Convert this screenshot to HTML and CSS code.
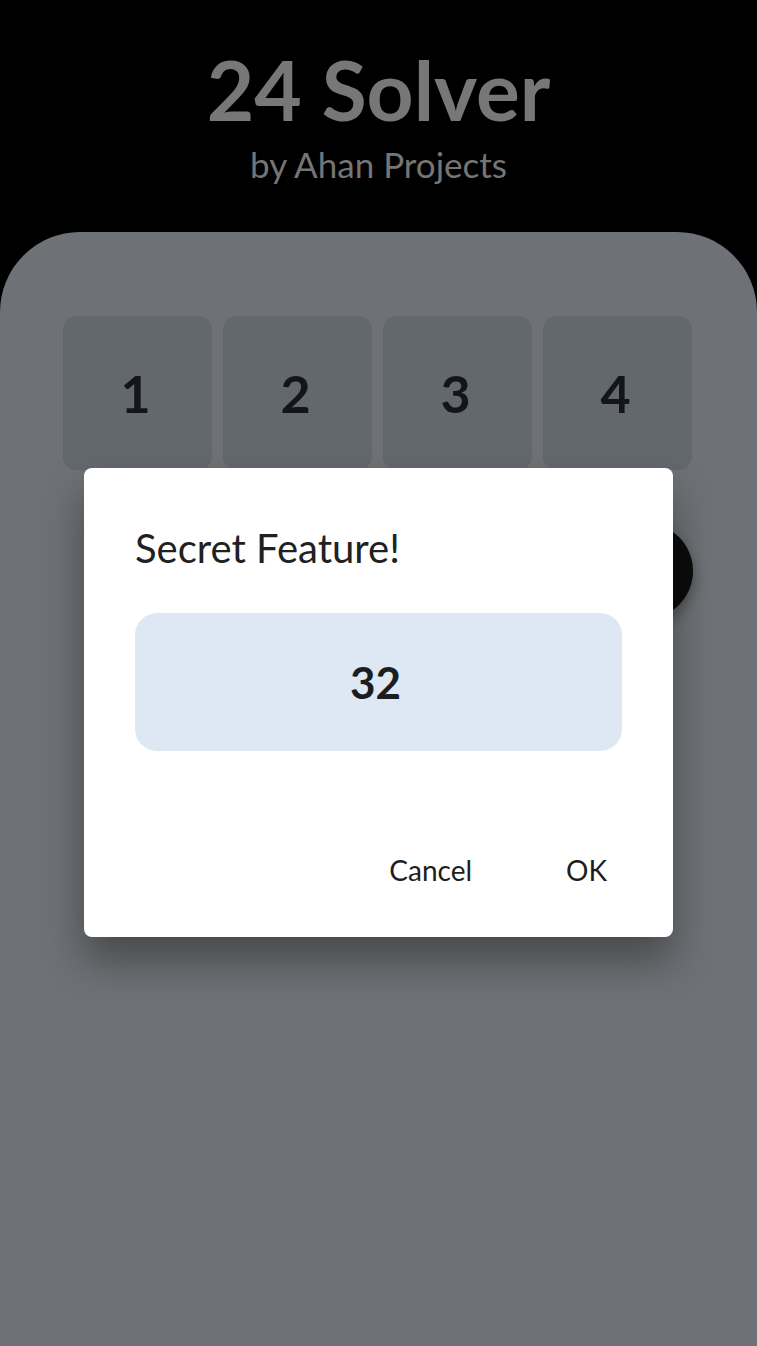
FILE: index.html
```html
<!DOCTYPE html>
<html>
<head>
<meta charset="utf-8">
<link rel="stylesheet" href="styles.css">
</head>
<body>
<header class="header">
  <h1 class="title">24 Solver</h1>
  <p class="subtitle">by Ahan Projects</p>
</header>
<main class="card">
  <div class="tiles">
    <div class="tile">1</div>
    <div class="tile">2</div>
    <div class="tile">3</div>
    <div class="tile">4</div>
  </div>
  <div class="fab"></div>
</main>
<div class="dialog">
  <h2 class="dialog-title">Secret Feature!</h2>
  <div class="dialog-field">32</div>
  <div class="dialog-actions">
    <span class="btn">Cancel</span>
    <span class="btn">OK</span>
  </div>
</div>
</body>
</html>
```
FILE: styles.css
```css
html, body {
  margin: 0;
  padding: 0;
  background: #000;
  font-family: Lato, "Noto Sans", sans-serif;
}
body {
  width: 757px;
  height: 1346px;
  overflow: hidden;
  display: flex;
  flex-direction: column;
}
.header {
  display: flex;
  flex-direction: column;
  align-items: center;
  padding-top: 44px;
  height: 232px;
  box-sizing: border-box;
}
.title {
  margin: 0;
  font-size: 82px;
  font-weight: 700;
  color: #777777;
  line-height: 90px;
}
.subtitle {
  margin: 8px 0 0 0;
  font-size: 35px;
  color: #757575;
  line-height: 44px;
}
.card {
  position: relative;
  flex: 1;
  background: #6e7175;
  border-radius: 80px 80px 0 0;
  padding: 84px 64px 0 63px;
}
.tiles {
  display: grid;
  grid-template-columns: repeat(4, 149px);
  gap: 11px;
}
.tile {
  height: 154px;
  background: #63676e;
  border-radius: 14px;
  display: flex;
  align-items: center;
  justify-content: center;
  font-size: 52px;
  font-weight: 700;
  color: #141518;
  padding-right: 4px;
  box-sizing: border-box;
}
.fab {
  position: absolute;
  left: 597px;
  top: 291px;
  width: 96px;
  height: 96px;
  border-radius: 50%;
  background: #0b0b0b;
  box-shadow: 0 6px 14px rgba(0,0,0,0.35);
}
.dialog {
  position: absolute;
  left: 84px;
  top: 468px;
  width: 589px;
  height: 469px;
  box-sizing: border-box;
  background: #fff;
  border-radius: 8px;
  box-shadow: 0 24px 40px rgba(0,0,0,0.35);
  padding: 52px 51px 0 51px;
  display: flex;
  flex-direction: column;
}
.dialog-title {
  margin: 0;
  font-size: 40px;
  font-weight: 400;
  color: #212121;
  line-height: 56px;
}
.dialog-field {
  margin-top: 37px;
  width: 487px;
  height: 138px;
  background: #dde8f4;
  border-radius: 22px;
  display: flex;
  align-items: center;
  justify-content: center;
  font-size: 44px;
  font-weight: 700;
  color: #1c1d21;
  padding-right: 6px;
  box-sizing: border-box;
}
.dialog-actions {
  display: flex;
  justify-content: flex-end;
  gap: 94px;
  margin-top: 99px;
  padding-right: 15px;
}
.btn {
  font-size: 28px;
  color: #1d1d1d;
  line-height: 40px;
}
```
